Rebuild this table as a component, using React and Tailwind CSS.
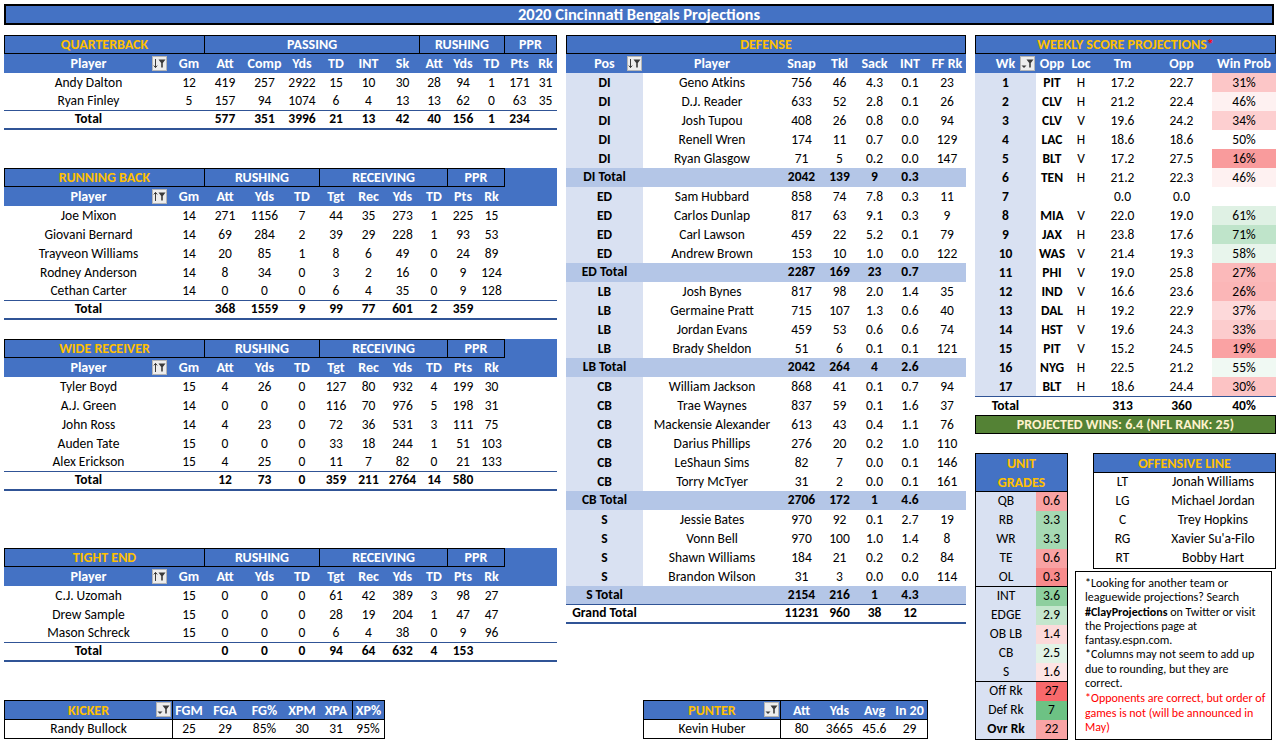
import React from 'react';

const LW = ['w-[169px]','w-[32px]','w-[40px]','w-[39px]','w-[36px]','w-[32px]','w-[33px]','w-[35px]','w-[28px]','w-[30px]','w-[27px]','w-[29px]','w-[23px]'];
const DW = ['w-[77px]','w-[138px]','w-[41px]','w-[35px]','w-[35px]','w-[36px]','w-[38px]'];
const WW = ['w-[61px]','w-[32px]','w-[26px]','w-[57px]','w-[61px]','w-[64px]'];

function FilterIcon({ kind, className }) {
  return (
    <svg width="15" height="15" viewBox="0 0 15 15" className={className}>
      <rect x="0.5" y="0.5" width="14" height="14" fill="#EDEDED" stroke="#B5B5B5" />
      <path d="M6.5 3.5H13.5L10.8 7V11.5H9.2V7Z" fill="#3A3A3A" />
      {kind === 'down' && <path d="M3.5 3V11.5M1.8 9.6L3.5 11.6L5.2 9.6" stroke="#3A3A3A" fill="none" strokeWidth="1" />}
      {kind === 'up' && <path d="M3.5 3.4V12M1.8 5.4L3.5 3.4L5.2 5.4" stroke="#3A3A3A" fill="none" strokeWidth="1" />}
      {kind === 'drop' && <path d="M1.5 9.5H6.5L4 12Z" fill="#3A3A3A" />}
    </svg>
  );
}

function C({ w, children, className = '' }) {
  return (
    <div className={`${w} shrink-0 h-full flex items-center justify-center whitespace-nowrap ${className}`}>{children}</div>
  );
}

function PosTable({ groups, cols, rows, total, icon }) {
  const widths = LW.slice(0, cols.length);
  return (
    <div className="flex flex-col">
      <div className="flex h-[19px] bg-[#4472C4] font-bold text-[14px]">
        {groups.map((g, i) => (
          <div key={i} className={`${g.w} shrink-0 h-full flex items-center justify-center border-y border-r border-black ${i === 0 ? 'border-l text-[#FFC000]' : 'text-white'}`}>{g.label}</div>
        ))}
      </div>
      <div className="flex h-[19px] bg-[#4472C4] text-white font-bold text-[14px]">
        {cols.map((c, i) => (
          <C key={i} w={widths[i]} className={i === 0 ? 'relative' : ''}>
            {c}
            {i === 0 && <FilterIcon kind={icon} className="absolute right-[6px] top-[2px]" />}
          </C>
        ))}
      </div>
      {rows.map((r, ri) => (
        <div key={ri} className={`flex h-[19px] pt-[1px] ${ri === rows.length - 1 ? 'border-b border-[#305496]' : ''}`}>
          {r.map((v, i) => <C key={i} w={widths[i]}>{v}</C>)}
        </div>
      ))}
      <div className="flex h-[19px] font-bold border-b-2 border-[#305496]">
        {total.map((v, i) => <C key={i} w={widths[i]}>{v}</C>)}
      </div>
    </div>
  );
}

const G4 = (t) => [
  { w: 'w-[201px]', label: t },
  { w: 'w-[115px]', label: 'RUSHING' },
  { w: 'w-[128px]', label: 'RECEIVING' },
  { w: 'w-[57px]', label: 'PPR' },
];
const SKILL_COLS = ['Player','Gm','Att','Yds','TD','Tgt','Rec','Yds','TD','Pts','Rk'];

const qbRows = [
  ['Andy Dalton',12,419,257,2922,15,10,30,28,94,1,171,31],
  ['Ryan Finley',5,157,94,1074,6,4,13,13,62,0,63,35],
];
const rbRows = [
  ['Joe Mixon',14,271,1156,7,44,35,273,1,225,15],
  ['Giovani Bernard',14,69,284,2,39,29,228,1,93,53],
  ['Trayveon Williams',14,20,85,1,8,6,49,0,24,89],
  ['Rodney Anderson',14,8,34,0,3,2,16,0,9,124],
  ['Cethan Carter',14,0,0,0,6,4,35,0,9,128],
];
const wrRows = [
  ['Tyler Boyd',15,4,26,0,127,80,932,4,199,30],
  ['A.J. Green',14,0,0,0,116,70,976,5,198,31],
  ['John Ross',14,4,23,0,72,36,531,3,111,75],
  ['Auden Tate',15,0,0,0,33,18,244,1,51,103],
  ['Alex Erickson',15,4,25,0,11,7,82,0,21,133],
];
const teRows = [
  ['C.J. Uzomah',15,0,0,0,61,42,389,3,98,27],
  ['Drew Sample',15,0,0,0,28,19,204,1,47,47],
  ['Mason Schreck',15,0,0,0,6,4,38,0,9,96],
];

const defense = [
  { pos: 'DI', rows: [
    ['Geno Atkins',756,46,'4.3','0.1',23],
    ['D.J. Reader',633,52,'2.8','0.1',26],
    ['Josh Tupou',408,26,'0.8','0.0',94],
    ['Renell Wren',174,11,'0.7','0.0',129],
    ['Ryan Glasgow',71,5,'0.2','0.0',147],
  ], total: [2042,139,9,'0.3'] },
  { pos: 'ED', rows: [
    ['Sam Hubbard',858,74,'7.8','0.3',11],
    ['Carlos Dunlap',817,63,'9.1','0.3',9],
    ['Carl Lawson',459,22,'5.2','0.1',79],
    ['Andrew Brown',153,10,'1.0','0.0',122],
  ], total: [2287,169,23,'0.7'] },
  { pos: 'LB', rows: [
    ['Josh Bynes',817,98,'2.0','1.4',35],
    ['Germaine Pratt',715,107,'1.3','0.6',40],
    ['Jordan Evans',459,53,'0.6','0.6',74],
    ['Brady Sheldon',51,6,'0.1','0.1',121],
  ], total: [2042,264,4,'2.6'] },
  { pos: 'CB', rows: [
    ['William Jackson',868,41,'0.1','0.7',94],
    ['Trae Waynes',837,59,'0.1','1.6',37],
    ['Mackensie Alexander',613,43,'0.4','1.1',76],
    ['Darius Phillips',276,20,'0.2','1.0',110],
    ['LeShaun Sims',82,7,'0.0','0.1',146],
    ['Torry McTyer',31,2,'0.0','0.1',161],
  ], total: [2706,172,1,'4.6'] },
  { pos: 'S', rows: [
    ['Jessie Bates',970,92,'0.1','2.7',19],
    ['Vonn Bell',970,100,'1.0','1.4',8],
    ['Shawn Williams',184,21,'0.2','0.2',84],
    ['Brandon Wilson',31,3,'0.0','0.0',114],
  ], total: [2154,216,1,'4.3'] },
];

const weeks = [
  [1,'PIT','H','17.2','22.7','31%','bg-[#FCC6C7]'],
  [2,'CLV','H','21.2','22.4','46%','bg-[#FEF1F1]'],
  [3,'CLV','V','19.6','24.2','34%','bg-[#FDCFD0]'],
  [4,'LAC','H','18.6','18.6','50%','bg-white'],
  [5,'BLT','V','17.2','27.5','16%','bg-[#F99B9C]'],
  [6,'TEN','H','21.2','22.3','46%','bg-[#FEF1F1]'],
  [7,'','','0.0','0.0','','bg-white'],
  [8,'MIA','V','22.0','19.0','61%','bg-[#DFF1E4]'],
  [9,'JAX','H','23.8','17.6','71%','bg-[#BFE4CA]'],
  [10,'WAS','V','21.4','19.3','58%','bg-[#E8F5EC]'],
  [11,'PHI','V','19.0','25.8','27%','bg-[#FBB9BA]'],
  [12,'IND','V','16.6','23.6','26%','bg-[#FBB6B7]'],
  [13,'DAL','H','19.2','22.9','37%','bg-[#FDD9DA]'],
  [14,'HST','V','19.6','24.3','33%','bg-[#FCCCCD]'],
  [15,'PIT','V','15.2','24.5','19%','bg-[#FAA2A3]'],
  [16,'NYG','H','22.5','21.2','55%','bg-[#F0F9F3]'],
  [17,'BLT','H','18.6','24.4','30%','bg-[#FCC3C4]'],
];

const grades = [
  [
    ['QB','0.6','bg-[#F9A2A3]'],
    ['RB','3.3','bg-[#A5D9B3]'],
    ['WR','3.3','bg-[#A5D9B3]'],
    ['TE','0.6','bg-[#F9A2A3]'],
    ['OL','0.3','bg-[#F88B8C]'],
  ],
  [
    ['INT','3.6','bg-[#8DCF9E]'],
    ['EDGE','2.9','bg-[#C4E6CD]'],
    ['OB LB','1.4','bg-[#FCDADA]'],
    ['CB','2.5','bg-[#E3F3E7]'],
    ['S','1.6','bg-[#FDE5E5]'],
  ],
  [
    ['Off Rk','27','bg-[#F8696B]'],
    ['Def Rk','7','bg-[#6DC284]'],
    ['Ovr Rk','22','bg-[#F9A4A5]'],
  ],
];

const oline = [
  ['LT','Jonah Williams'],
  ['LG','Michael Jordan'],
  ['C','Trey Hopkins'],
  ['RG',"Xavier Su'a-Filo"],
  ['RT','Bobby Hart'],
];

function DefenseTable() {
  return (
    <div className="flex flex-col w-[400px]">
      <div className="h-[19px] bg-[#4472C4] border border-black flex items-center justify-center font-bold text-[14px] text-[#FFC000]">DEFENSE</div>
      <div className="flex h-[19px] bg-[#4472C4] text-white font-bold text-[14px]">
        {['Pos','Player','Snap','Tkl','Sack','INT','FF Rk'].map((c, i) => (
          <C key={i} w={DW[i]} className={i === 0 ? 'relative' : ''}>
            {c}
            {i === 0 && <FilterIcon kind="down" className="absolute right-[1px] top-[2px]" />}
          </C>
        ))}
      </div>
      {defense.map((g, gi) => (
        <React.Fragment key={gi}>
          {g.rows.map((r, ri) => (
            <div key={ri} className="flex h-[19px]">
              <C w={DW[0]} className="bg-[#D9E1F2] font-bold pt-[1px]">{g.pos}</C>
              {r.map((v, i) => <C key={i} w={DW[i + 1]} className="pt-[1px]">{v}</C>)}
            </div>
          ))}
          <div className={`flex h-[19px] bg-[#B4C6E7] font-bold ${gi === defense.length - 1 ? 'border-b border-[#305496]' : ''}`}>
            <C w={DW[0]}>{g.pos} Total</C>
            <C w={DW[1]}></C>
            {g.total.map((v, i) => <C key={i} w={DW[i + 2]}>{v}</C>)}
            <C w={DW[6]}></C>
          </div>
        </React.Fragment>
      ))}
      <div className="flex h-[19px] font-bold border-b-2 border-[#305496]">
        <C w={DW[0]}>Grand Total</C>
        <C w={DW[1]}></C>
        <C w={DW[2]}>11231</C>
        <C w={DW[3]}>960</C>
        <C w={DW[4]}>38</C>
        <C w={DW[5]}>12</C>
        <C w={DW[6]}></C>
      </div>
    </div>
  );
}

function WeeklyTable() {
  return (
    <div className="flex flex-col w-[301px]">
      <div className="h-[19px] bg-[#4472C4] border border-black flex items-center justify-center font-bold text-[14px] text-[#FFC000]">
        WEEKLY SCORE PROJECTIONS<span className="text-[#FF0000]">*</span>
      </div>
      <div className="flex h-[19px] bg-[#4472C4] text-white font-bold text-[14px]">
        {['Wk','Opp','Loc','Tm','Opp','Win Prob'].map((c, i) => (
          <C key={i} w={WW[i]} className={i === 0 ? 'relative' : ''}>
            {c}
            {i === 0 && <FilterIcon kind="drop" className="absolute right-[1px] top-[2px]" />}
          </C>
        ))}
      </div>
      {weeks.map((w, wi) => (
        <div key={wi} className="flex h-[19px]">
          <C w={WW[0]} className="bg-[#D9E1F2] font-bold pt-[1px]">{w[0]}</C>
          <C w={WW[1]} className="font-bold pt-[1px]">{w[1]}</C>
          <C w={WW[2]} className="pt-[1px]">{w[2]}</C>
          <C w={WW[3]} className="pt-[1px]">{w[3]}</C>
          <C w={WW[4]} className="pt-[1px]">{w[4]}</C>
          <C w={WW[5]} className={`pt-[1px] ${w[6]}`}>{w[5]}</C>
        </div>
      ))}
      <div className="flex h-[19px] font-bold border-t border-[#305496]">
        <C w={WW[0]}>Total</C>
        <C w={WW[1]}></C>
        <C w={WW[2]}></C>
        <C w={WW[3]}>313</C>
        <C w={WW[4]}>360</C>
        <C w={WW[5]}>40%</C>
      </div>
      <div className="h-[19px] bg-[#548235] border border-black flex items-center justify-center font-bold text-[14px] text-[#FFF2CC]">
        PROJECTED WINS: 6.4 (NFL RANK: 25)
      </div>
    </div>
  );
}

function UnitGrades() {
  return (
    <div className="w-[93px] border border-black flex flex-col">
      <div className="bg-[#4472C4] text-[#FFC000] font-bold text-[14px] border-b border-black flex flex-col">
        <div className="h-[19px] flex items-center justify-center">UNIT</div>
        <div className="h-[18px] flex items-center justify-center">GRADES</div>
      </div>
      {grades.map((g, gi) => (
        <div key={gi} className={`flex flex-col ${gi < grades.length - 1 ? 'border-b border-black' : ''}`}>
          {g.map((r, ri) => (
            <div key={ri} className={`flex ${ri === g.length - 1 && gi < grades.length - 1 ? 'h-[18px]' : 'h-[19px]'}`}>
              <C w="w-[60px]" className={`bg-[#D9E1F2] ${r[0] === 'Ovr Rk' ? 'font-bold' : ''}`}>{r[0]}</C>
              <C w="w-[31px]" className={r[2]}>{r[1]}</C>
            </div>
          ))}
        </div>
      ))}
    </div>
  );
}

function OLine() {
  return (
    <div className="w-[183px] ml-[18px] border border-black flex flex-col">
      <div className="h-[19px] bg-[#4472C4] border-b border-black flex items-center justify-center font-bold text-[14px] text-[#FFC000]">OFFENSIVE LINE</div>
      {oline.map((r, i) => (
        <div key={i} className="flex h-[19px]">
          <C w="w-[57px]">{r[0]}</C>
          <C w="w-[124px]">{r[1]}</C>
        </div>
      ))}
    </div>
  );
}

function Notes() {
  return (
    <div className="w-[197px] h-[169px] mt-[2px] border border-black pl-[9px] pt-[4px] text-[12px] leading-[14.3px] whitespace-nowrap">
      <div>*Looking for another team or</div>
      <div>leaguewide projections? Search</div>
      <div><span className="font-bold">#ClayProjections</span> on Twitter or visit</div>
      <div>the Projections page at</div>
      <div>fantasy.espn.com.</div>
      <div>*Columns may not seem to add up</div>
      <div>due to rounding, but they are</div>
      <div>correct.</div>
      <div className="text-[#FF0000] mt-[1px]">
        <div>*Opponents are correct, but order of</div>
        <div>games is not (will be announced in</div>
        <div>May)</div>
      </div>
    </div>
  );
}

function Kicker() {
  const cols = ['FGM','FGA','FG%','XPM','XPA'];
  const vals = [25,29,'85%',30,31];
  const ws = ['w-[32px]','w-[40px]','w-[39px]','w-[36px]','w-[32px]'];
  return (
    <div className="w-[381px] border border-black flex flex-col">
      <div className="flex h-[19px] bg-[#4472C4] text-white font-bold text-[14px] border-b border-black">
        <C w="w-[168px]" className="relative border-r border-black text-[#FFC000]">
          KICKER
          <FilterIcon kind="drop" className="absolute right-[1px] top-[1px]" />
        </C>
        {cols.map((c, i) => <C key={i} w={ws[i]}>{c}</C>)}
        <div className="flex-1 h-full flex items-center justify-center border-l border-black">XP%</div>
      </div>
      <div className="flex h-[18px]">
        <C w="w-[168px]" className="border-r border-black">Randy Bullock</C>
        {vals.map((v, i) => <C key={i} w={ws[i]}>{v}</C>)}
        <div className="flex-1 h-full flex items-center justify-center">95%</div>
      </div>
    </div>
  );
}

function Punter() {
  return (
    <div className="w-[285px] ml-[77px] border border-black flex flex-col">
      <div className="flex h-[19px] bg-[#4472C4] text-white font-bold text-[14px] border-b border-black">
        <C w="w-[137px]" className="relative border-r border-black text-[#FFC000]">
          PUNTER
          <FilterIcon kind="drop" className="absolute right-[1px] top-[1px]" />
        </C>
        <C w="w-[41px]">Att</C>
        <C w="w-[35px]">Yds</C>
        <C w="w-[35px]">Avg</C>
        <div className="flex-1 h-full flex items-center justify-center">In 20</div>
      </div>
      <div className="flex h-[18px]">
        <C w="w-[137px]" className="border-r border-black">Kevin Huber</C>
        <C w="w-[41px]">80</C>
        <C w="w-[35px]">3665</C>
        <C w="w-[35px]">45.6</C>
        <div className="flex-1 h-full flex items-center justify-center">29</div>
      </div>
    </div>
  );
}

export default function App() {
  return (
    <div className="w-[1278px] h-[747px] overflow-hidden bg-white text-black text-[13.5px] font-[Carlito,Lato,sans-serif]">
      <div className="ml-[4px] mt-[4px] w-[1270px] h-[21px] bg-[#4472C4] border-2 border-black flex items-center justify-center text-white font-bold text-[16.5px]">
        2020 Cincinnati Bengals Projections
      </div>
      <div className="flex ml-[4px] mt-[10px] gap-[9px]">
        <div className="w-[553px] flex flex-col">
          <PosTable
            groups={[
              { w: 'w-[201px]', label: 'QUARTERBACK' },
              { w: 'w-[215px]', label: 'PASSING' },
              { w: 'w-[85px]', label: 'RUSHING' },
              { w: 'w-[52px]', label: 'PPR' },
            ]}
            cols={['Player','Gm','Att','Comp','Yds','TD','INT','Sk','Att','Yds','TD','Pts','Rk']}
            rows={qbRows}
            total={['Total','',577,351,3996,21,13,42,40,156,1,234,'']}
            icon="down"
          />
          <div className="mt-[38px]">
            <PosTable groups={G4('RUNNING BACK')} cols={SKILL_COLS} rows={rbRows}
              total={['Total','',368,1559,9,99,77,601,2,359,'']} icon="up" />
          </div>
          <div className="mt-[19px]">
            <PosTable groups={G4('WIDE RECEIVER')} cols={SKILL_COLS} rows={wrRows}
              total={['Total','',12,73,0,359,211,2764,14,580,'']} icon="up" />
          </div>
          <div className="mt-[57px]">
            <PosTable groups={G4('TIGHT END')} cols={SKILL_COLS} rows={teRows}
              total={['Total','',0,0,0,94,64,632,4,153,'']} icon="up" />
          </div>
          <div className="mt-[38px]">
            <Kicker />
          </div>
        </div>
        <div className="w-[400px] flex flex-col">
          <DefenseTable />
          <div className="mt-[76px]">
            <Punter />
          </div>
        </div>
        <div className="w-[301px] flex flex-col">
          <WeeklyTable />
          <div className="flex mt-[19px]">
            <UnitGrades />
            <div className="ml-[7px] flex flex-col">
              <OLine />
              <Notes />
            </div>
          </div>
        </div>
      </div>
    </div>
  );
}
